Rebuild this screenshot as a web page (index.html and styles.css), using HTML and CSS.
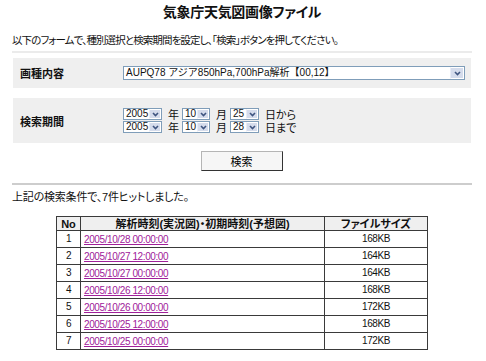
FILE: index.html
```html
<!DOCTYPE html>
<html>
<head>
<meta charset="UTF-8">
<link rel="stylesheet" href="styles.css">
</head>
<body>
<div class="page">
<h1 class="title">気象庁天気図画像ファイル</h1>
<p class="lead">以下のフォームで、種別選択と検索期間を設定し、「検索」ボタンを押してください。</p>
<div class="rule"></div>

<div class="panel panel-kind">
	<div class="label">画種内容</div>
	<div class="sel sel-wide">
		<span class="val">AUPQ78 アジア850hPa,700hPa解析【00,12】</span>
		<span class="arrow"><svg width="9" height="9" viewBox="0 0 9 9"><path d="M2 3 L4.5 5.5 L7 3" fill="none" stroke="#3f5580" stroke-width="1.6"/></svg></span>
	</div>
</div>

<div class="panel panel-date">
	<div class="label">検索期間</div>
	<div class="dates">
		<div class="daterow">
			<div class="sel sel-y"><span class="val">2005</span><span class="arrow"><svg width="9" height="9" viewBox="0 0 9 9"><path d="M2 3 L4.5 5.5 L7 3" fill="none" stroke="#3f5580" stroke-width="1.6"/></svg></span></div>
			<span class="unit">年</span>
			<div class="sel sel-m"><span class="val">10</span><span class="arrow"><svg width="9" height="9" viewBox="0 0 9 9"><path d="M2 3 L4.5 5.5 L7 3" fill="none" stroke="#3f5580" stroke-width="1.6"/></svg></span></div>
			<span class="unit">月</span>
			<div class="sel sel-d"><span class="val">25</span><span class="arrow"><svg width="9" height="9" viewBox="0 0 9 9"><path d="M2 3 L4.5 5.5 L7 3" fill="none" stroke="#3f5580" stroke-width="1.6"/></svg></span></div>
			<span class="unit">日から</span>
		</div>
		<div class="daterow">
			<div class="sel sel-y"><span class="val">2005</span><span class="arrow"><svg width="9" height="9" viewBox="0 0 9 9"><path d="M2 3 L4.5 5.5 L7 3" fill="none" stroke="#3f5580" stroke-width="1.6"/></svg></span></div>
			<span class="unit">年</span>
			<div class="sel sel-m"><span class="val">10</span><span class="arrow"><svg width="9" height="9" viewBox="0 0 9 9"><path d="M2 3 L4.5 5.5 L7 3" fill="none" stroke="#3f5580" stroke-width="1.6"/></svg></span></div>
			<span class="unit">月</span>
			<div class="sel sel-d"><span class="val">28</span><span class="arrow"><svg width="9" height="9" viewBox="0 0 9 9"><path d="M2 3 L4.5 5.5 L7 3" fill="none" stroke="#3f5580" stroke-width="1.6"/></svg></span></div>
			<span class="unit">日まで</span>
		</div>
	</div>
</div>

<div class="actions">
	<button class="btn">検索</button>
</div>
<div class="rule rule-dark"></div>

<p class="result">上記の検索条件で、7件ヒットしました。</p>

<table class="list">
	<tr>
		<th class="c-no">No</th>
		<th class="c-time">解析時刻(実況図)・初期時刻(予想図)</th>
		<th class="c-size">ファイルサイズ</th>
	</tr>
	<tr><td class="c-no num">1</td><td class="c-time"><a href="#" class="num">2005/10/28 00:00:00</a></td><td class="c-size num">168KB</td></tr>
	<tr><td class="c-no num">2</td><td class="c-time"><a href="#" class="num">2005/10/27 12:00:00</a></td><td class="c-size num">164KB</td></tr>
	<tr><td class="c-no num">3</td><td class="c-time"><a href="#" class="num">2005/10/27 00:00:00</a></td><td class="c-size num">164KB</td></tr>
	<tr><td class="c-no num">4</td><td class="c-time"><a href="#" class="num">2005/10/26 12:00:00</a></td><td class="c-size num">168KB</td></tr>
	<tr><td class="c-no num">5</td><td class="c-time"><a href="#" class="num">2005/10/26 00:00:00</a></td><td class="c-size num">172KB</td></tr>
	<tr><td class="c-no num">6</td><td class="c-time"><a href="#" class="num">2005/10/25 12:00:00</a></td><td class="c-size num">168KB</td></tr>
	<tr><td class="c-no num">7</td><td class="c-time"><a href="#" class="num">2005/10/25 00:00:00</a></td><td class="c-size num">172KB</td></tr>
</table>
</div>
</body>
</html>
```

FILE: styles.css
```css
body {
	margin: 0;
	font-family: "Liberation Sans", "Noto Sans CJK JP", sans-serif;
	font-feature-settings: "palt";
	color: #111;
	background-color: white;
}

.page {
	padding: 0 14px 0 12px;
}

.title {
	margin: 3px 0 0;
	font-size: 14px;
	line-height: 18px;
	font-weight: bold;
	text-align: center;
	letter-spacing: -0.3px;
}

.lead {
	margin: 12px 0 0;
	font-size: 10.5px;
	line-height: 14px;
	letter-spacing: -0.9px;
}

.rule {
	margin-top: 4px;
	height: 2px;
	background-color: #ebebeb;
}

.rule-dark {
	margin-top: 12px;
	background-color: #cdcdcd;
}

.panel {
	margin: 5px 1px 0;
	background-color: #efefef;
	display: flex;
	align-items: center;
	padding-left: 7px;
}

.panel-kind {
	height: 30px;
}

.panel-date {
	margin-top: 10px;
	height: 45px;
}

.label {
	width: 103px;
	font-size: 11px;
	font-weight: bold;
}

/* fake select box, XP look */
.sel {
	display: flex;
	align-items: stretch;
	box-sizing: border-box;
	border: 1px solid #7f9db9;
	background-color: white;
	font-size: 10px;
	font-feature-settings: normal;
}

.sel .val {
	flex: 1;
	padding-left: 2px;
	white-space: nowrap;
	overflow: hidden;
}

.sel .arrow {
	width: 10px;
	display: flex;
	align-items: center;
	justify-content: center;
	background-color: #d5dcec;
	border: 1px solid #fff;
	border-left-color: #e8ecf6;
}

.sel-wide {
	width: 342px;
	height: 14px;
	line-height: 12px;
}

.sel-wide .arrow {
	width: 12px;
}

.dates {
	display: flex;
	flex-direction: column;
	gap: 1px;
}

.daterow {
	display: flex;
	align-items: center;
	height: 12px;
}

.daterow .sel {
	height: 12px;
	line-height: 10px;
}

.sel-y {
	width: 39px;
}

.sel-m {
	width: 28px;
}

.sel-d {
	width: 29px;
}

.unit {
	font-size: 11px;
	margin: 0 3px 0 6px;
	min-width: 10px;
}

.actions {
	margin-top: 8px;
	text-align: center;
}

.btn {
	width: 82px;
	height: 20px;
	padding: 0;
	font-family: inherit;
	font-size: 11px;
	background-color: #f6f6f6;
	border: 1px solid;
	border-color: #b5b5b5 #333 #333 #b5b5b5;
	margin-left: -1px;
}

.result {
	margin: 5px 0 0;
	font-size: 11px;
	line-height: 14px;
	letter-spacing: -0.2px;
}

.list {
	margin: 12px auto 0;
	border-collapse: collapse;
	font-size: 11px;
}

.list th, .list td {
	border: 1px solid #3a3a3a;
	padding: 0;
}

.list th {
	height: 13px;
	line-height: 12px;
	background-color: #efefef;
	font-weight: bold;
}

.list td {
	height: 16px;
	line-height: 14px;
}

.c-no {
	width: 23px;
	text-align: center;
}

.c-time {
	width: 240px;
}

.list td.c-time {
	padding-left: 3px;
}

.c-size {
	width: 102px;
	text-align: center;
}

.num {
	font-size: 10px;
	letter-spacing: -0.4px;
}

.list a {
	color: #a0209a;
}
```
